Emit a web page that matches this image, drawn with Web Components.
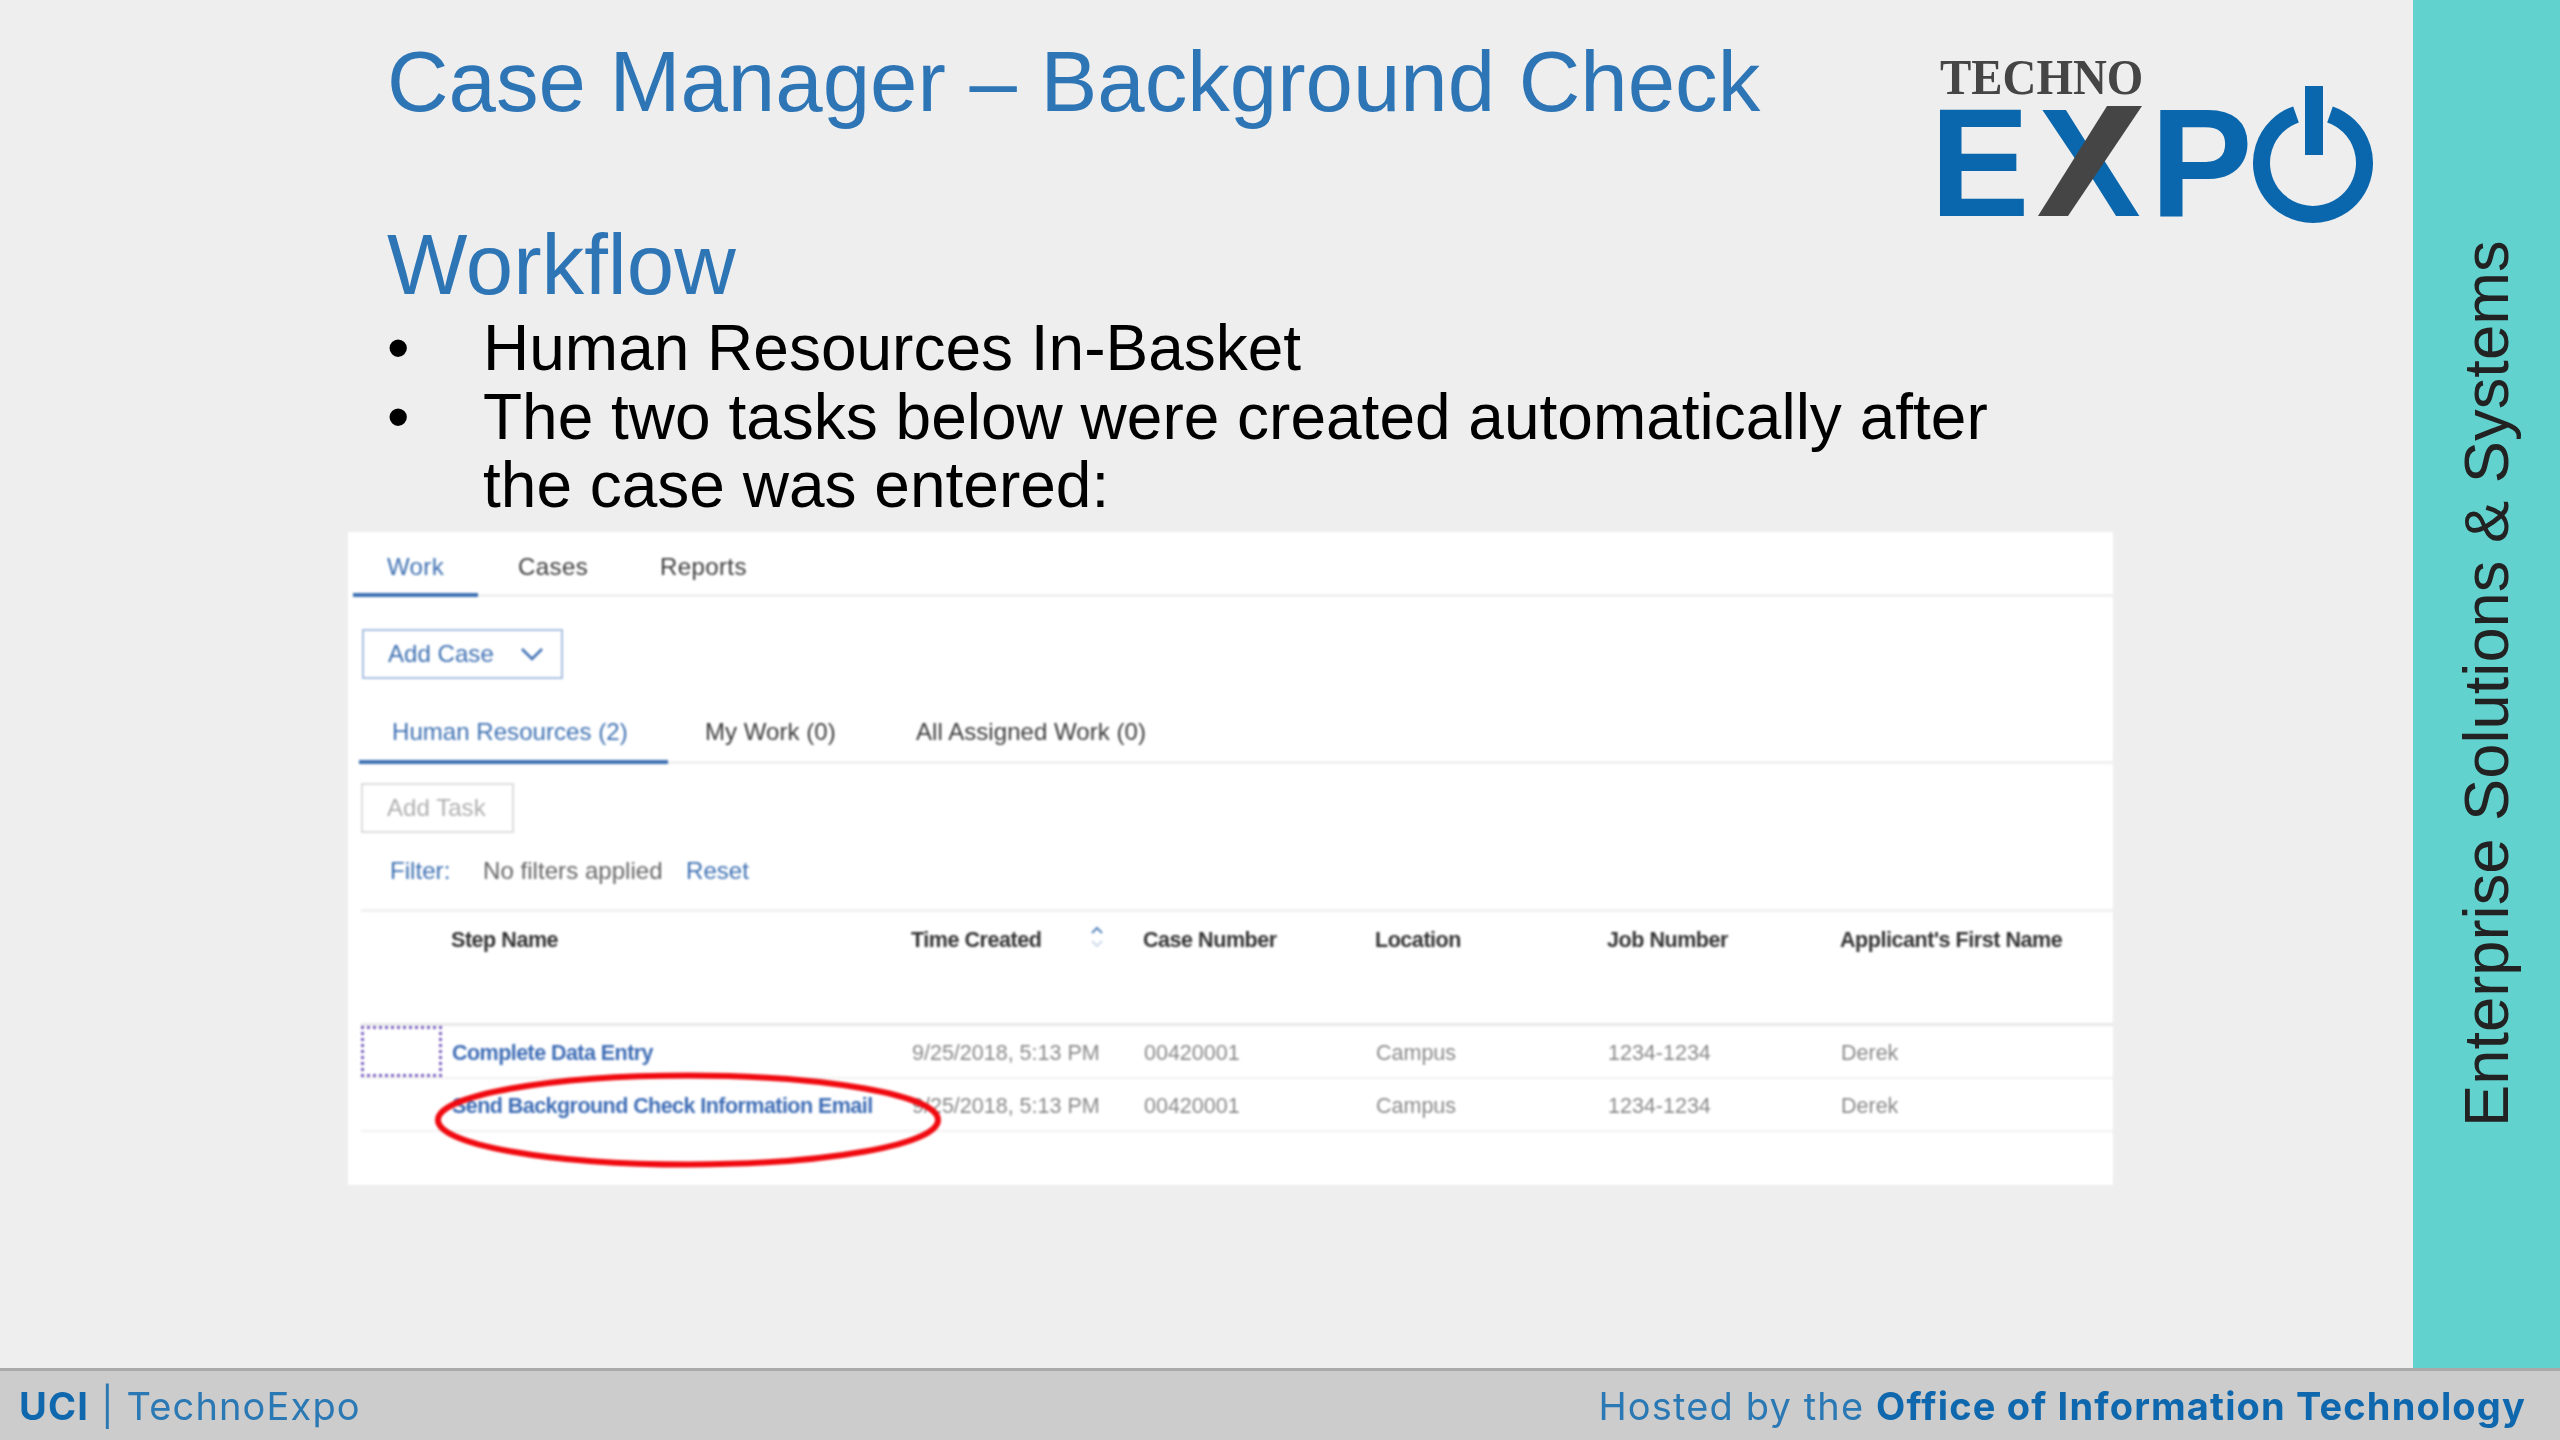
<!DOCTYPE html>
<html lang="en">
<head>
<meta charset="utf-8">
<title>Case Manager - Background Check</title>
<style>
  html, body { margin: 0; padding: 0; background: #eeeeee; }
</style>
</head>
<body>
<slide-frame>
  <slide-title slot="logo-row">Case Manager – Background Check<br><br>Workflow</slide-title>
  <techno-logo slot="logo-row"></techno-logo>
  <slide-bullets>
    <li>Human Resources In-Basket</li>
    <li>The two tasks below were created automatically after the case was entered:</li>
  </slide-bullets>
  <case-panel></case-panel>
</slide-frame>

<script>
// -------------------------------------------------
// <slide-frame>: slide body, teal band and footer
// -------------------------------------------------
class SlideFrame extends HTMLElement {
  constructor() {
    super();
    this.attachShadow({ mode: "open" });
    this.shadowRoot.innerHTML = `
    <style>
      :host {
        display: grid;
        grid-template-columns: 2413px 147px;
        grid-template-rows: 1368px 72px;
        width: 2560px;
        height: 1440px;
        overflow: hidden;
        background: #eeeeee;
      }
      .main { padding-left: 348px; min-width: 0; }
      .head {
        display: flex;
        justify-content: space-between;
        align-items: flex-start;
        padding-left: 39px;
        padding-right: 39px;
      }
      .band {
        background: #62d2cf;
        display: flex;
        justify-content: center;
        padding-top: 241px;
      }
      .band span {
        writing-mode: vertical-rl;
        transform: rotate(180deg);
        height: 886px;
        font: 63.3px/1 "Liberation Sans", sans-serif;
        color: #222222;
        white-space: nowrap;
      }
      slide-footer { grid-column: 1 / 3; }
    </style>
    <div class="main">
      <div class="head"><slot name="logo-row"></slot></div>
      <slot></slot>
    </div>
    <div class="band"><span>Enterprise Solutions &amp; Systems</span></div>
    <slide-footer></slide-footer>
    `;
  }
}

class SlideTitle extends HTMLElement {
  constructor() {
    super();
    this.attachShadow({ mode: "open" });
    this.shadowRoot.innerHTML = `
    <style>
      :host {
        display: block;
        padding-top: 36px;
        font: 85.2px/91.5px "Liberation Sans", sans-serif;
        color: #2e75b6;
        white-space: nowrap;
      }
    </style>
    <slot></slot>
    `;
  }
}

// logo: letters stay real text, the power ring and the X slash are shapes
class TechnoLogo extends HTMLElement {
  constructor() {
    super();
    this.attachShadow({ mode: "open" });
    this.shadowRoot.innerHTML = `
    <style>
      :host { display: block; width: 444px; height: 210px; margin-top: 47px; filter: blur(.6px); }
      svg { display: block; }
      .techno { font: bold 51px "Liberation Serif", serif; fill: #454545; }
      .big { font: bold 154px "Liberation Sans", sans-serif; fill: #0a67ad; }
    </style>
    <svg width="444" height="210" viewBox="50 20 444 210">
      <text class="techno" transform="translate(60 67) scale(.92 1)">TECHNO</text>
      <text class="big" transform="translate(50 189) scale(.97 1)">E</text>
      <text class="big" x="158" y="189">X</text>
      <polygon points="227,79 262,79 188,189 158,189" fill="#454545"/>
      <text class="big" x="270" y="189">P</text>
      <path d="M416 87.4 A51.5 51.5 0 1 0 450 87.4" fill="none" stroke="#0a67ad" stroke-width="17"/>
      <rect x="425" y="59" width="18" height="69" fill="#0a67ad"/>
    </svg>
    `;
  }
}

class SlideBullets extends HTMLElement {
  constructor() {
    super();
    this.attachShadow({ mode: "open" });
    this.shadowRoot.innerHTML = `
    <style>
      :host {
        display: block;
        margin-top: 3.5px;
        padding-left: 135px;
        width: 1580px;
        height: 217.5px;
        font: 64px/68.6px "Liberation Sans", sans-serif;
        color: #000000;
      }
      ::slotted(li) { list-style: none; position: relative; }
      ::slotted(li)::before {
        content: "•";
        position: absolute;
        left: -96px;
      }
    </style>
    <slot></slot>
    `;
  }
}

// -------------------------------------------------
// <case-panel>: pasted screenshot of the Case Manager app
// -------------------------------------------------
class CasePanel extends HTMLElement {
  constructor() {
    super();
    this.attachShadow({ mode: "open" });
    this.shadowRoot.innerHTML = `
    <style>
      :host {
        display: block;
        position: relative;
        width: 1765px;
        height: 653px;
        background: #ffffff;
        font: 24px/1 "Liberation Sans", sans-serif;
        letter-spacing: 0.05px;
        color: #3c3c3c;
        filter: blur(.8px);
      }
      .tabs {
        display: flex;
        height: 62px;
        margin-left: 5px;
        border-bottom: 3px solid #f0f0f0;
      }
      .tabs span {
        display: block;
        box-sizing: border-box;
        height: 65px;
        padding-top: 23px;
        border-bottom: 4px solid transparent;
      }
      .tabs .on { color: #3d70b2; border-bottom-color: #3d70b2; }
      .main-tabs { letter-spacing: .4px; }
      .main-tabs span:nth-child(1) { width: 125px; padding-left: 34px; }
      .main-tabs span:nth-child(2) { width: 182px; padding-left: 40px; }
      .main-tabs span:nth-child(3) { padding-left: 0; }
      .btn {
        display: flex;
        align-items: center;
        box-sizing: border-box;
        height: 50px;
      }
      .add-case {
        width: 201px;
        margin: 32px 0 0 14px;
        padding-left: 24px;
        border: 2px solid #a9c0e0;
        color: #3d70b2;
        gap: 26px;
      }
      .sub-tabs { margin: 0 0 0 11px; height: 79px; margin-top: 3px; }
      .sub-tabs span { height: 82px; padding-top: 38px; }
      .sub-tabs span:nth-child(1) { width: 309px; padding-left: 33px; }
      .sub-tabs span:nth-child(2) { width: 248px; padding-left: 37px; }
      .add-task {
        width: 153px;
        margin: 19px 0 0 13px;
        padding-left: 24px;
        border: 2px solid #dddddd;
        color: #b0b0b0;
      }
      .filter {
        display: grid;
        grid-template-columns: 93px 203px auto;
        justify-content: start;
        margin: 26px 0 0 42px;
        height: 50px;
        color: #666666;
      }
      .blue { color: #3d70b2; }
      task-table { margin-left: 13px; }
      .ring { position: absolute; left: 86px; top: 539px; }
    </style>
    <div class="tabs main-tabs">
      <span class="on">Work</span><span>Cases</span><span>Reports</span>
    </div>
    <div class="btn add-case">Add Case
      <svg width="24" height="14" viewBox="0 0 24 14"><path d="M2 2 L12 12 L22 2" fill="none" stroke="#3d70b2" stroke-width="2.5"/></svg>
    </div>
    <div class="tabs sub-tabs">
      <span class="on">Human Resources (2)</span><span>My Work (0)</span><span>All Assigned Work (0)</span>
    </div>
    <div class="btn add-task">Add Task</div>
    <div class="filter"><span class="blue">Filter:</span><span>No filters applied</span><span class="blue">Reset</span></div>
    <task-table></task-table>
    <svg class="ring" width="510" height="100" viewBox="0 0 510 100">
      <ellipse cx="254" cy="49" rx="250" ry="44.5" fill="none" stroke="#f00a10" stroke-width="6"/>
    </svg>
    `;
  }
}

// -------------------------------------------------
// <task-table>: header row plus rows built from data
// -------------------------------------------------
class TaskTable extends HTMLElement {
  constructor() {
    super();
    this.attachShadow({ mode: "open" });
    const columnas = ["Time Created", "Case Number", "Location", "Job Number", "Applicant's First Name"];
    const filas = ["Complete Data Entry", "Send Background Check Information Email"];
    const celdas = ["9/25/2018, 5:13 PM", "00420001", "Campus", "1234-1234", "Derek"];
    const sort = `<svg class="sort" width="14" height="24" viewBox="0 0 14 24"><path d="M2 8 L7 3 L12 8" fill="none" stroke="#5a86c0" stroke-width="2"/><path d="M2 16 L7 21 L12 16" fill="none" stroke="#cfdcec" stroke-width="2"/></svg>`;
    this.shadowRoot.innerHTML = `
    <style>
      :host { display: block; font-size: 21.5px; letter-spacing: 0; }
      .row {
        display: grid;
        grid-template-columns: 90px 460px 232px 232px 232px 233px 1fr;
        align-items: center;
        box-sizing: border-box;
        height: 53px;
        border-bottom: 2px solid #f1f1f1;
        color: #8a8a8a;
      }
      .head {
        height: 117px;
        align-items: start;
        padding-top: 18px;
        border-top: 3px solid #f1f1f1;
        border-bottom: 3px solid #e9e9e9;
        color: #333333;
        font-weight: bold;
        letter-spacing: -0.45px;
      }
      .cell { position: relative; white-space: nowrap; }
      .row:not(.head) .cell { padding-top: 5px; padding-left: 1px; }
      .step { font-weight: bold; color: #3d6cb5; letter-spacing: -0.55px; }
      .sort { position: absolute; left: 179px; top: -5px; }
      .focus { box-sizing: border-box; width: 81px; height: 51px; border: 3px dotted #7a5fc0; }
    </style>
    <div class="row head">
      <span></span><span class="cell">Step Name</span>
      ${columnas.map((c, i) => `<span class="cell">${c}${i === 0 ? sort : ""}</span>`).join("")}
    </div>
    ${filas.map((f, i) => `
    <div class="row">
      <span>${i === 0 ? '<div class="focus"></div>' : ""}</span>
      <span class="cell step">${f}</span>
      ${celdas.map(c => `<span class="cell">${c}</span>`).join("")}
    </div>`).join("")}
    `;
  }
}

class SlideFooter extends HTMLElement {
  constructor() {
    super();
    this.attachShadow({ mode: "open" });
    this.shadowRoot.innerHTML = `
    <style>
      :host {
        display: flex;
        justify-content: space-between;
        align-items: center;
        box-sizing: border-box;
        height: 72px;
        padding: 0 34px 0 19px;
        background: #cccccc;
        border-top: 3px solid #a9a9a9;
        font: 38px "Inter", sans-serif;
        color: #2a78b4;
        letter-spacing: 1.15px;
        filter: blur(.5px);
      }
      b { color: #0f68ad; font-weight: bold; }
    </style>
    <span><b>UCI</b> | TechnoExpo</span>
    <span>Hosted by the <b>Office of Information Technology</b></span>
    `;
  }
}

customElements.define("slide-title", SlideTitle);
customElements.define("techno-logo", TechnoLogo);
customElements.define("slide-bullets", SlideBullets);
customElements.define("task-table", TaskTable);
customElements.define("case-panel", CasePanel);
customElements.define("slide-footer", SlideFooter);
customElements.define("slide-frame", SlideFrame);
</script>
</body>
</html>
